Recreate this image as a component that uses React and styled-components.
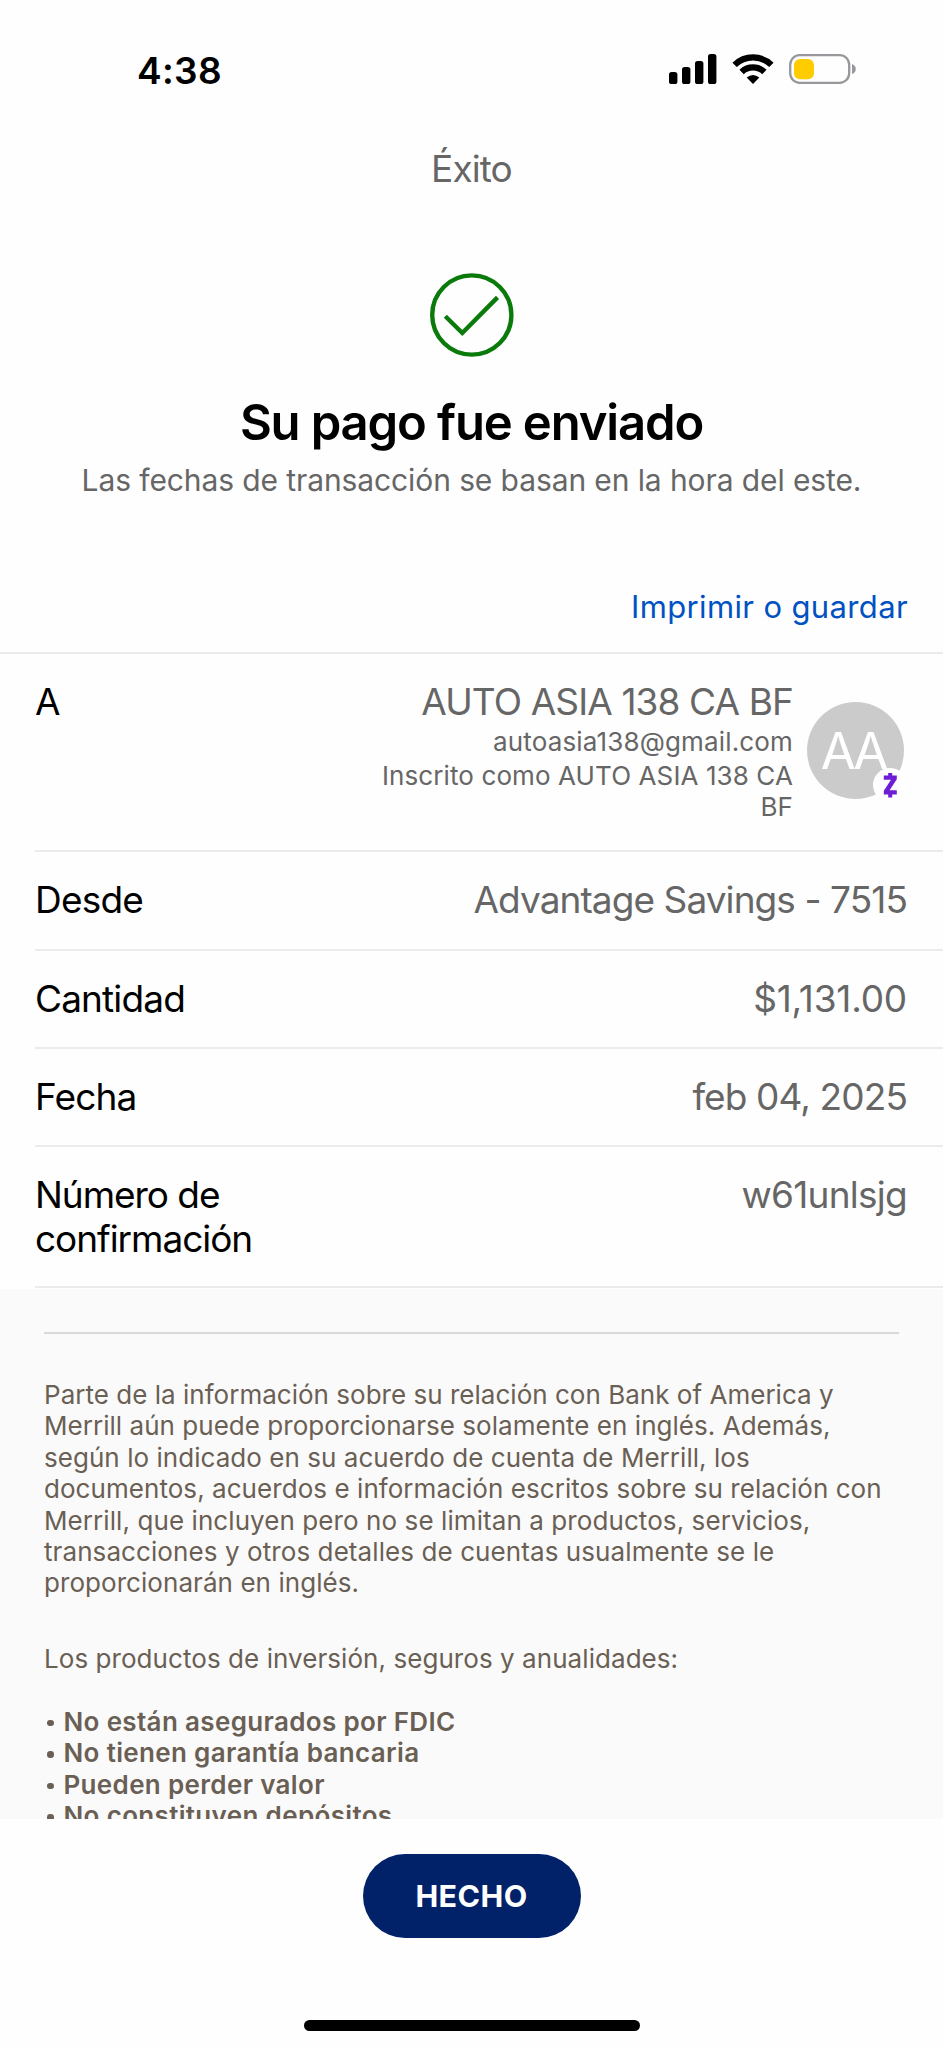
import React from "react";
import styled, { createGlobalStyle } from "styled-components";

const GlobalStyle = createGlobalStyle`
  * { box-sizing: border-box; }
  body { margin: 0; background: #fefefe; }
`;

const Screen = styled.div`
  width: 943px;
  height: 2048px;
  overflow: hidden;
  display: flex;
  flex-direction: column;
  background: #fefefe;
  color: #000;
  font-family: Inter, "Liberation Sans", sans-serif;
`;

const StatusBar = styled.header`
  height: 120px;
  flex: none;
  display: flex;
  justify-content: space-between;
  align-items: flex-start;
  padding: 48px 86px 0 137px;
`;

const Clock = styled.div`
  padding-top: 1px;
  font-size: 37px;
  line-height: 44px;
  font-weight: 600;
  letter-spacing: 0.3px;
`;

const StatusIcons = styled.div`
  display: flex;
  gap: 15px;
  padding-top: 6px;
  svg { display: block; }
`;

const NavTitle = styled.h1`
  margin: 27px 0 0;
  text-align: center;
  font-size: 37px;
  line-height: 44px;
  font-weight: 400;
  letter-spacing: -0.9px;
  color: #666;
`;

const Success = styled.section`
  display: flex;
  flex-direction: column;
  align-items: center;
  padding-top: 82px;
  svg { display: block; }
`;

const Headline = styled.h2`
  margin: 36px 0 0;
  font-size: 49px;
  line-height: 60px;
  font-weight: 600;
  letter-spacing: -1.14px;
`;

const Note = styled.p`
  margin: 7px 0 0;
  font-size: 30px;
  line-height: 40px;
  letter-spacing: -0.1px;
  color: #666;
`;

const LinkBar = styled.div`
  display: flex;
  justify-content: flex-end;
  padding: 87px 35px 25px;
`;

const PrintLink = styled.a`
  font-size: 31px;
  line-height: 40px;
  letter-spacing: 0.366px;
  color: #0052c2;
`;

const Details = styled.dl`
  margin: 0;
  height: 637px;
  flex: none;
  border-top: 2px solid #ebebeb;
`;

const Row = styled.div`
  margin-left: 35px;
  height: ${(p) => p.$height}px;
  padding: 26px 36px 0 0;
  display: flex;
  justify-content: space-between;
  align-items: flex-start;
  border-bottom: 2px solid #ebebeb;
  font-size: 37px;
  line-height: 44px;
`;

const Label = styled.dt`
  width: 270px;
  letter-spacing: ${(p) => p.$track}px;
`;

const Value = styled.dd`
  margin: 0;
  color: #666;
  letter-spacing: ${(p) => p.$track}px;
`;

const Recipient = styled.dd`
  margin: 0;
  padding-right: 3px;
  display: flex;
  gap: 14px;
  color: #666;
`;

const RecipientText = styled.div`
  width: 430px;
  text-align: right;
`;

const Name = styled.div`
  letter-spacing: -0.88px;
`;

const Detail = styled.div`
  margin-top: ${(p) => p.$gap}px;
  font-size: 26px;
  line-height: 31px;
  letter-spacing: ${(p) => p.$track}px;
`;

const Avatar = styled.div`
  position: relative;
  width: 97px;
  height: 97px;
  margin-top: 22px;
  padding-right: 5px;
  border-radius: 50%;
  background: #cbcbcb;
  color: #fff;
  display: flex;
  align-items: center;
  justify-content: center;
  font-size: 51px;
  font-weight: 400;
  letter-spacing: -3.2px;
  svg { position: absolute; left: 65px; top: 65px; }
`;

const Legal = styled.section`
  height: 530px;
  flex: none;
  overflow: hidden;
  background: #fafafa;
  padding: 43px 44px 0;
  color: #6a5f54;
  font-size: 26px;
  line-height: 31.4px;
`;

const Rule = styled.hr`
  margin: 0 0 45px;
  border: 0;
  height: 2px;
  background: #d8d8d8;
`;

const Paragraph = styled.p`
  margin: 0 0 ${(p) => p.$gap}px;
`;

const Line = styled.span`
  display: block;
  white-space: nowrap;
  letter-spacing: ${(p) => p.$track}px;
`;

const Bullets = styled.ul`
  margin: 0;
  padding: 0;
  list-style: none;
`;

const Bullet = styled.li`
  display: flex;
  align-items: center;
  gap: 10px;
  padding-left: 3px;
  font-weight: 600;
  letter-spacing: 0.34px;
  &::before {
    content: "";
    width: 6.5px;
    height: 6.5px;
    margin-top: 3px;
    border-radius: 50%;
    background: currentColor;
  }
`;

const Footer = styled.footer`
  flex: 1;
  display: flex;
  flex-direction: column;
  align-items: center;
  justify-content: space-between;
  padding: 35px 0 17px;
`;

const DoneButton = styled.button`
  width: 218px;
  height: 84px;
  padding: 0 0 2px;
  border: 0;
  border-radius: 42px;
  background: #012169;
  color: #fff;
  font: 650 30.5px Inter, "Liberation Sans", sans-serif;
  letter-spacing: 0.4px;
`;

const HomeIndicator = styled.div`
  width: 336px;
  height: 11px;
  border-radius: 6px;
  background: #000;
`;

const Signal = () => (
  <svg width="48" height="30" viewBox="0 0 48 30">
    <rect x="0" y="18" width="8.4" height="12" rx="2.6" />
    <rect x="13" y="13" width="8.4" height="17" rx="2.6" />
    <rect x="26" y="7" width="8.4" height="23" rx="2.6" />
    <rect x="39" y="0" width="8.4" height="30" rx="2.6" />
  </svg>
);

const Wifi = () => (
  <svg width="42" height="30" viewBox="0 0 42 30">
    <g fill="none" stroke="#000" strokeWidth="6.2">
      <path d="M2.6 10.9A26.4 26.4 0 0 1 39.4 10.9" />
      <path d="M9.6 18A16.4 16.4 0 0 1 32.4 18" />
    </g>
    <path d="M21 30L14.7 23.6Q21 18.4 27.3 23.6Z" />
  </svg>
);

const Battery = () => (
  <svg width="68" height="30" viewBox="0 0 68 30">
    <rect x="1.2" y="1.2" width="59" height="27.6" rx="9.5" fill="none" stroke="#98989c" strokeWidth="2.3" />
    <rect x="5" y="4.9" width="20" height="20.4" rx="6" fill="#ffcc00" />
    <path d="M63 10Q66.8 11.5 66.8 15Q66.8 18.5 63 20Z" fill="#98989c" />
  </svg>
);

const CheckCircle = () => (
  <svg width="84" height="84" viewBox="0 0 84 84" fill="none" stroke="#0a7a0a" strokeWidth="4.4">
    <circle cx="41.8" cy="42" r="39.6" />
    <path d="M15.3 43.2L32.3 60L67.5 24.4" />
  </svg>
);

const ZelleBadge = () => (
  <svg width="36" height="36" viewBox="0 0 36 36">
    <circle cx="18" cy="18" r="17" fill="#fff" />
    <path
      d="M16.2 6H20.2V8.4H24.8V12.2L17.6 23.2H24.8V27.6H20.2V30.6H16.2V27.6H11.8V23.8L19 12.8H11.8V8.4H16.2Z"
      fill="#6d1ed4"
    />
  </svg>
);

const facts = [
  { label: "Desde", value: "Advantage Savings - 7515", height: 99, lt: -0.8, vt: -0.92 },
  { label: "Cantidad", value: "$1,131.00", height: 98, lt: -0.85, vt: -0.2 },
  { label: "Fecha", value: "feb 04, 2025", height: 98, lt: -0.85, vt: -0.889 },
  { label: "Número de confirmación", value: "w61unlsjg", height: 141, lt: -1.05, vt: -0.75 },
];

const notice = [
  ["Parte de la información sobre su relación con Bank of America y", 0.021],
  ["Merrill aún puede proporcionarse solamente en inglés. Además,", 0.035],
  ["según lo indicado en su acuerdo de cuenta de Merrill, los", 0.043],
  ["documentos, acuerdos e información escritos sobre su relación con", 0.055],
  ["Merrill, que incluyen pero no se limitan a productos, servicios,", 0.08],
  ["transacciones y otros detalles de cuentas usualmente se le", 0.086],
  ["proporcionarán en inglés.", 0.06],
];

const disclosures = [
  "No están asegurados por FDIC",
  "No tienen garantía bancaria",
  "Pueden perder valor",
  "No constituyen depósitos",
];

export default function App() {
  return (
    <Screen>
      <GlobalStyle />
      <StatusBar>
        <Clock>4:38</Clock>
        <StatusIcons>
          <Signal />
          <Wifi />
          <Battery />
        </StatusIcons>
      </StatusBar>
      <NavTitle>Éxito</NavTitle>
      <Success>
        <CheckCircle />
        <Headline>Su pago fue enviado</Headline>
        <Note>Las fechas de transacción se basan en la hora del este.</Note>
      </Success>
      <LinkBar>
        <PrintLink>Imprimir o guardar</PrintLink>
      </LinkBar>
      <Details>
        <Row $height={198}>
          <Label $track={0}>A</Label>
          <Recipient>
            <RecipientText>
              <Name>AUTO ASIA 138 CA BF</Name>
              <Detail $gap={2} $track={0.16}>autoasia138@gmail.com</Detail>
              <Detail $gap={3} $track={0.102}>Inscrito como AUTO ASIA 138 CA BF</Detail>
            </RecipientText>
            <Avatar>
              AA
              <ZelleBadge />
            </Avatar>
          </Recipient>
        </Row>
        {facts.map((f) => (
          <Row key={f.label} $height={f.height}>
            <Label $track={f.lt}>{f.label}</Label>
            <Value $track={f.vt}>{f.value}</Value>
          </Row>
        ))}
      </Details>
      <Legal>
        <Rule />
        <Paragraph $gap={44}>
          {notice.map(([text, track]) => (
            <Line key={text} $track={track}>{text}</Line>
          ))}
        </Paragraph>
        <Paragraph $gap={31.6}>
          <Line $track={0.06}>Los productos de inversión, seguros y anualidades:</Line>
        </Paragraph>
        <Bullets>
          {disclosures.map((d) => (
            <Bullet key={d}>{d}</Bullet>
          ))}
        </Bullets>
      </Legal>
      <Footer>
        <DoneButton>HECHO</DoneButton>
        <HomeIndicator />
      </Footer>
    </Screen>
  );
}
